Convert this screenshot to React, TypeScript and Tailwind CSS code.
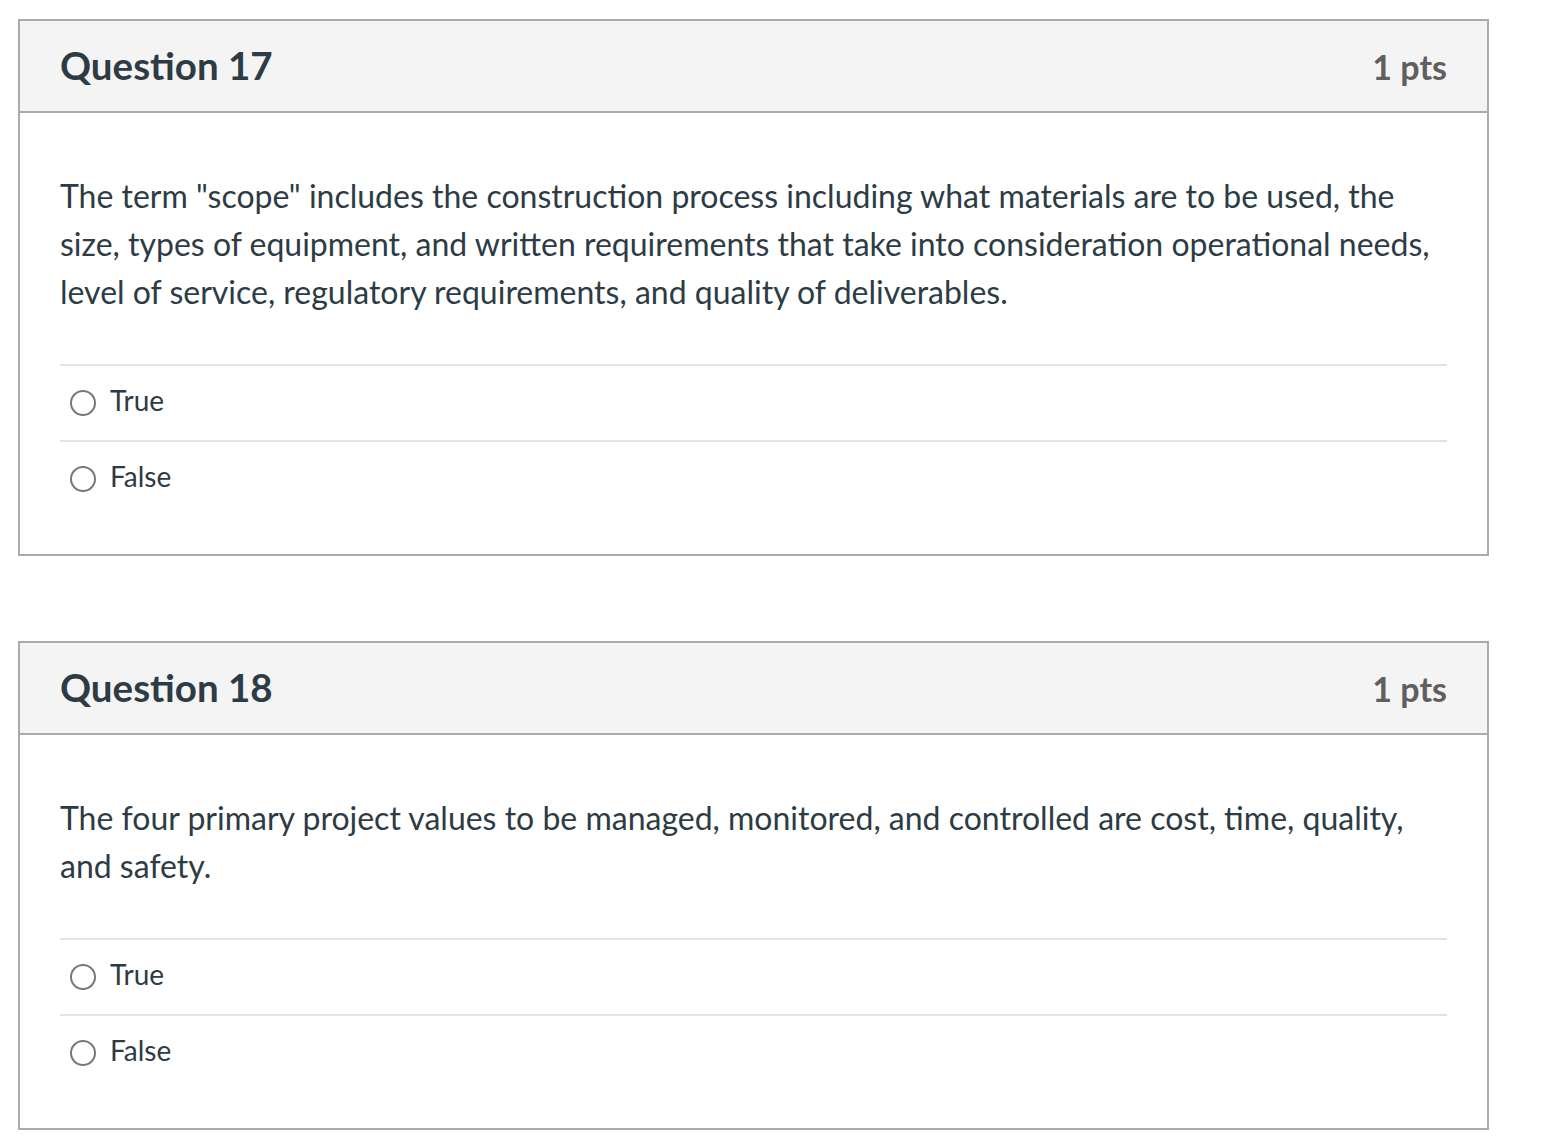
const questions = [
  {
    title: "Question 17",
    points: "1 pts",
    text:
      'The term "scope" includes the construction process including what materials are to be used, the size, types of equipment, and written requirements that take into consideration operational needs, level of service, regulatory requirements, and quality of deliverables.',
  },
  {
    title: "Question 18",
    points: "1 pts",
    text:
      "The four primary project values to be managed, monitored, and controlled are cost, time, quality, and safety.",
  },
];

function Answer({ label }: { label: string }) {
  return (
    <div className="flex items-center h-[76px] border-t-2 border-[#e2e2e2]">
      <span className="ml-[10px] w-[26px] h-[26px] rounded-full border-2 border-[#777] shrink-0" />
      <span className="ml-[14px] text-[28px] text-[#2d3b45] leading-none -mt-[6px]">{label}</span>
    </div>
  );
}

export default function App() {
  return (
    <div
      className="min-h-screen bg-white pt-[19px] pl-[18px] w-[1554px]"
      style={{ fontFamily: "Lato, 'Open Sans', sans-serif" }}
    >
      <div className="flex flex-col gap-[85px] w-[1471px]">
        {questions.map((q) => (
          <div key={q.title} className="border-2 border-[#aaaaaa]">
            <div className="h-[92px] bg-[#f4f4f4] border-b-2 border-[#aaaaaa] px-[40px] flex items-center justify-between">
              <h2 className="text-[38.5px] font-bold text-[#2d3b45] -mt-[1px]">{q.title}</h2>
              <span className="text-[34px] font-bold text-[#5f5f5f]">{q.points}</span>
            </div>
            <div className="px-[40px] pt-[59px] pb-[38px]">
              <p className="text-[32px] leading-[48px] text-[#2d3b45]">{q.text}</p>
              <div className="mt-[48px]">
                <Answer label="True" />
                <Answer label="False" />
              </div>
            </div>
          </div>
        ))}
      </div>
    </div>
  );
}
